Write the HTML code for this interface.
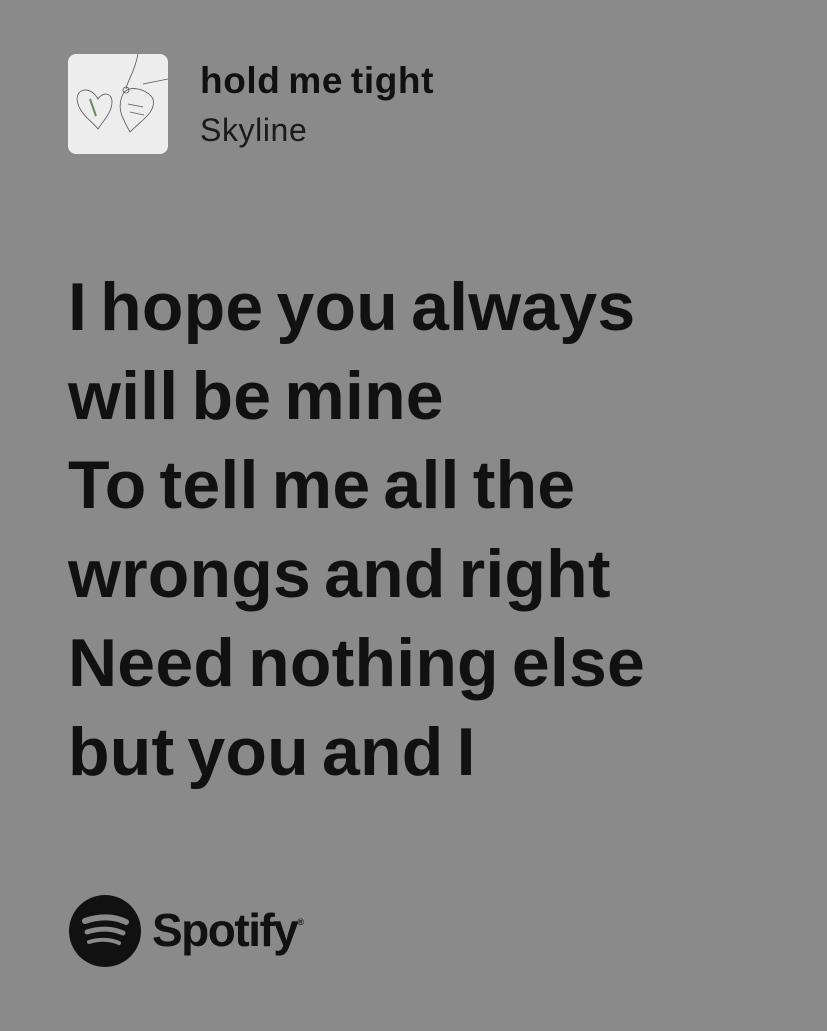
<!DOCTYPE html>
<html><head><style>
html,body{margin:0;padding:0;}
body{width:827px;height:1031px;background:#8a8a8a;font-family:"Liberation Sans",sans-serif;color:#111;position:relative;overflow:hidden;}
.art{position:absolute;left:68px;top:54px;width:100px;height:100px;border-radius:8px;background:#ededed;overflow:hidden;}
.t{position:absolute;left:200px;top:60px;font-size:37px;font-weight:bold;letter-spacing:0.6px;word-spacing:-3px;}
.a{position:absolute;left:200px;top:112px;font-size:32px;letter-spacing:0.6px;color:#1a1a1a;}
.ly{position:absolute;left:68px;top:263px;font-size:68px;font-weight:bold;line-height:89px;letter-spacing:0.2px;word-spacing:-6px;color:#111;}
.sp{position:absolute;left:152px;top:903px;font-size:46px;font-weight:bold;letter-spacing:-1.5px;color:#111;}
</style></head><body>
<div class="art"><svg width="100" height="100" viewBox="0 0 100 100" fill="none" stroke="#555" stroke-width="0.8">
<path d="M70 0 C66 20,60 25,58 35"/><path d="M75 30 C85 28,95 26,100 25"/>
<path d="M30 45 C22 30,5 35,10 50 C14 62,25 68,30 75 C36 66,44 58,44 48 C44 38,34 38,30 45Z"/>
<path d="M55 40 C60 30,80 35,85 45 C88 58,75 65,62 78 C55 65,48 55,55 40Z"/>
<circle cx="58" cy="36" r="3"/>
<path d="M22 45 L28 62" stroke="#6a8a5a" stroke-width="2"/>
<path d="M60 50 l15 3 M62 58 l14 3"/>
</svg></div>
<div class="t">hold me tight</div>
<div class="a">Skyline</div>
<div class="ly">I hope you always<br>will be mine<br>To tell me all the<br>wrongs and right<br>Need nothing else<br>but you and I</div>
<svg style="position:absolute;left:69px;top:895px" width="72" height="72" viewBox="0 0 72 72">
<circle cx="36" cy="36" r="36" fill="#111"/>
<path d="M16 26 C30 21,45 21,57 27" stroke="#8a8a8a" stroke-width="6" stroke-linecap="round" fill="none"/>
<path d="M18 37 C30 33,43 33,54 38" stroke="#8a8a8a" stroke-width="5" stroke-linecap="round" fill="none"/>
<path d="M20 47 C30 44,41 44,50 48" stroke="#8a8a8a" stroke-width="4" stroke-linecap="round" fill="none"/>
</svg>
<div class="sp">Spotify<span style="font-size:9px;vertical-align:top;position:relative;top:14px;">®</span></div>
</body></html>
